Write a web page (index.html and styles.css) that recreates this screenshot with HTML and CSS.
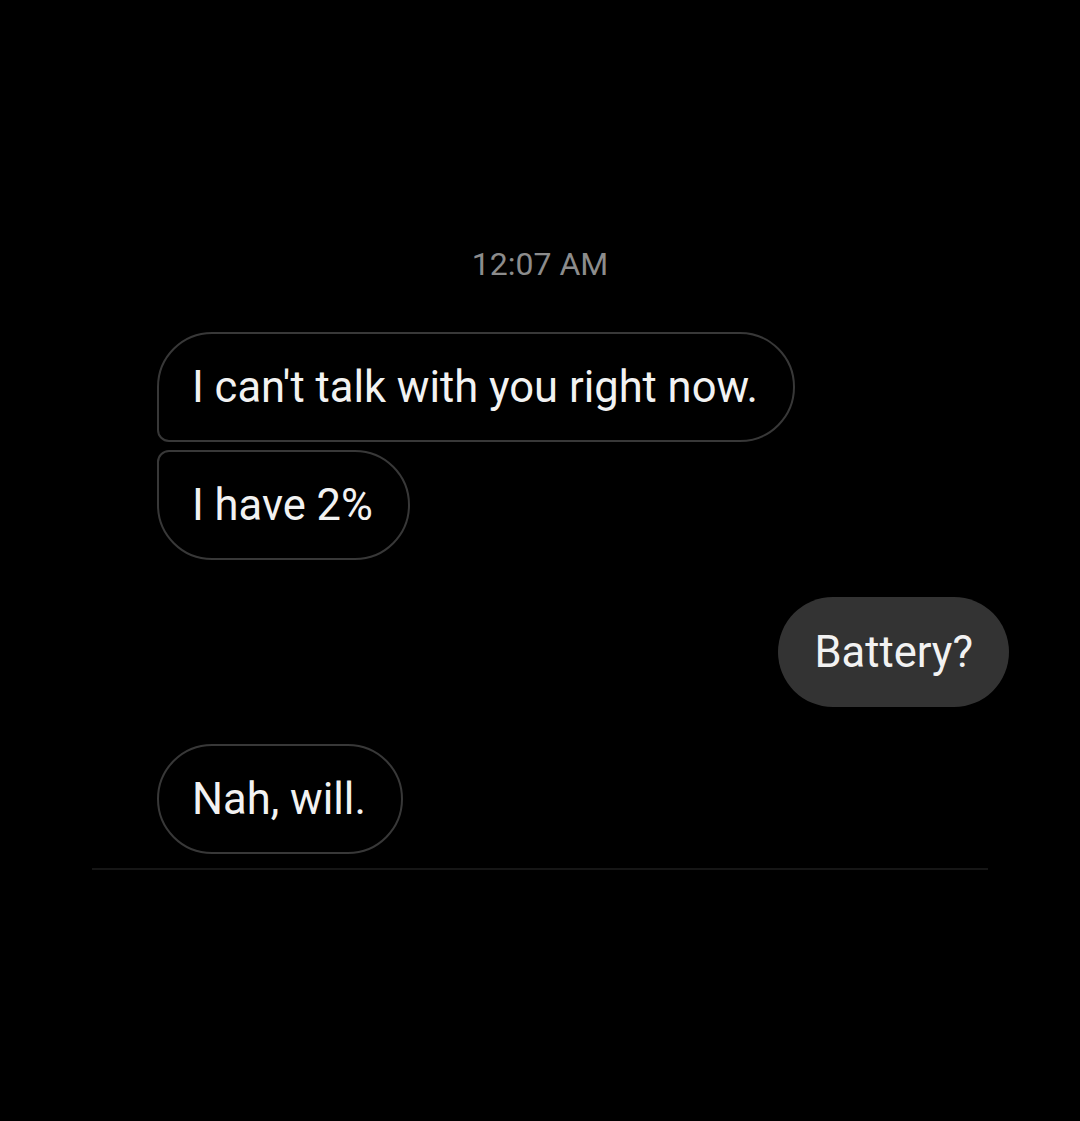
FILE: index.html
```html
<!DOCTYPE html>
<html>
<head>
<meta charset="utf-8">
<link rel="stylesheet" href="styles.css">
</head>
<body>
<div class="screen">
  <div class="time">12:07 AM</div>
  <div class="thread">
    <div class="row in"><div class="bubble in first">I can't talk with you right now.</div></div>
    <div class="row in gap-s"><div class="bubble in last">I have 2%</div></div>
    <div class="row out gap-l"><div class="bubble out">Battery?</div></div>
    <div class="row in gap-l"><div class="bubble in single">Nah, will.</div></div>
  </div>
  <div class="divider"></div>
</div>
</body>
</html>
```
FILE: styles.css
```css
html, body {
  margin: 0;
  padding: 0;
  background: #000;
}
.screen {
  width: 1080px;
  height: 1121px;
  box-sizing: border-box;
  padding-top: 246px;
  font-family: Roboto, "Liberation Sans", sans-serif;
  display: flex;
  flex-direction: column;
}
.time {
  text-align: center;
  color: #8c8c8c;
  font-size: 32px;
  line-height: 36px;
}
.thread {
  display: flex;
  flex-direction: column;
  padding: 50px 71px 0 157px;
}
.row {
  display: flex;
}
.row.out {
  justify-content: flex-end;
}
.gap-s { margin-top: 8px; }
.gap-l { margin-top: 37px; }
.bubble {
  box-sizing: border-box;
  height: 110px;
  display: flex;
  align-items: center;
  padding: 0 35px 0 33px;
  color: #f2f2f2;
  font-size: 43.5px;
  border-radius: 55px;
}
.bubble.in {
  border: 2px solid #383838;
}
.bubble.in.first {
  border-bottom-left-radius: 12px;
}
.bubble.in.last {
  border-top-left-radius: 12px;
}
.bubble.out {
  background: #333333;
  padding: 0 36px 0 36px;
}
.divider {
  margin: 14px 92px 0 92px;
  height: 2px;
  background: #161616;
}
```
